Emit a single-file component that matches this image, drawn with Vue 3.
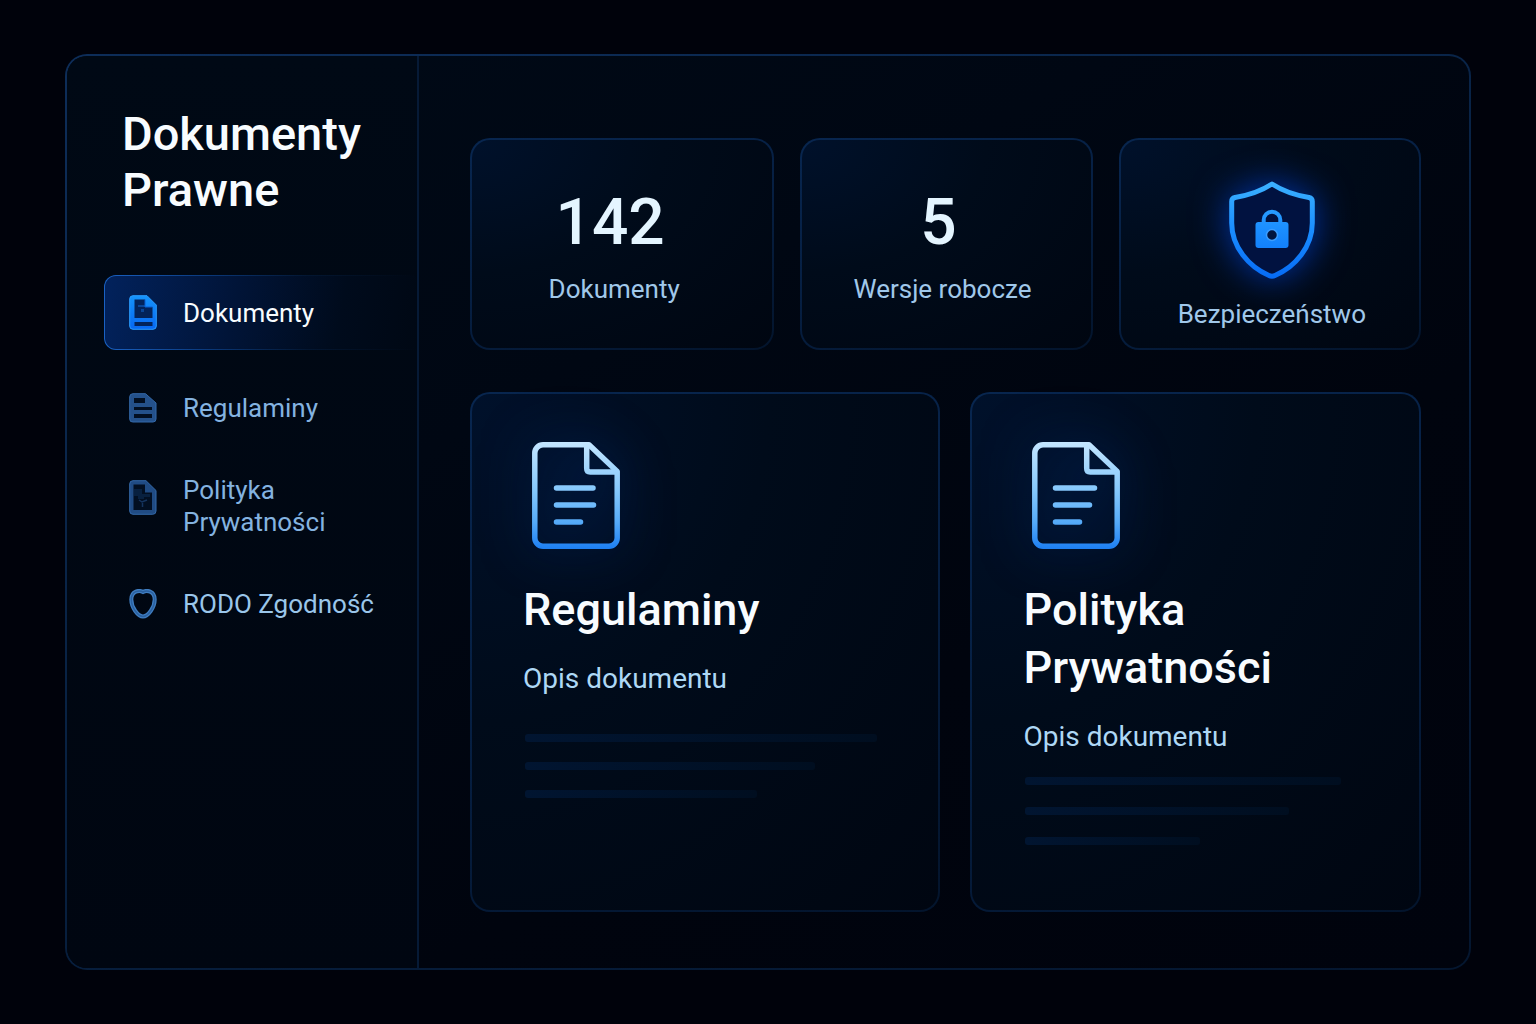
<script setup>
const navItems = [
  { label: 'Dokumenty', icon: 'document', active: true },
  { label: 'Regulaminy', icon: 'rules' },
  { label: 'Polityka Prywatności', icon: 'policy', tall: true },
  { label: 'RODO Zgodność', icon: 'heart', bright: true },
]

const docs = [
  {
    id: 'regulaminy',
    title: 'Regulaminy',
    description: 'Opis dokumentu',
    iconLines: ['M24.500 46H61', 'M24.500 63H61.500', 'M24.500 80H48.500'],
    lines: [97, 80, 64],
  },
  {
    id: 'polityka',
    title: 'Polityka Prywatności',
    description: 'Opis dokumentu',
    compact: true,
    iconLines: ['M23.500 46H62.500', 'M23.500 63H57.500', 'M23.500 80H47.500'],
    lines: [92, 77, 51],
  },
]
</script>

<template>
  <div class="page">
    <div class="panel">
      <aside class="sidebar">
        <h1 class="brand">Dokumenty Prawne</h1>
        <nav class="nav" aria-label="Menu">
          <a
            v-for="item in navItems"
            :key="item.label"
            href="#"
            class="nav-item"
            :class="{ active: item.active, tall: item.tall, bright: item.bright }"
          >
            <svg v-if="item.icon === 'document'" class="nav-icon" width="28" height="35" viewBox="0 0 28 35" aria-hidden="true">
              <defs>
                <linearGradient id="nav-doc" x1="0" y1="0" x2="0" y2="1">
                  <stop offset="0" stop-color="#1593fb" />
                  <stop offset="1" stop-color="#0768f2" />
                </linearGradient>
              </defs>
              <path d="M4 0.700H18L27.300 10V31a3.300 3.300 0 0 1-3.300 3.300H4A3.300 3.300 0 0 1 .7 31V4A3.300 3.300 0 0 1 4 .7z" fill="url(#nav-doc)" stroke="#2b9dff" stroke-width="1" />
              <path d="M5.500 4.500H16V12h7.500V23h-18z" fill="#03235a" />
              <path d="M5.500 27h18v4h-18z" fill="#03235a" />
              <path d="M9 10h7v2H9zM12 14h3v3h-3z" fill="#0a4596" />
              <path d="M16 4.500V12h7.500" fill="none" stroke="#0a5fd0" stroke-width="1" />
            </svg>
            <svg v-else-if="item.icon === 'rules'" class="nav-icon" width="28" height="30" viewBox="0 0 28 30" aria-hidden="true">
              <path d="M4 .7H16.500L27 10V26a3 3 0 0 1-3 3H4a3 3 0 0 1-3.300-3V4A3.300 3.300 0 0 1 4 .7z" fill="#24518b" stroke="#3368a8" />
              <path d="M5 5h11v5H5zM5 14h18v3H5zM5 21h18v4H5z" fill="#020f22" />
            </svg>
            <svg v-else-if="item.icon === 'policy'" class="nav-icon" width="28" height="35" viewBox="0 0 28 35" aria-hidden="true">
              <path d="M4 .7H17L27 10.500V31a3.300 3.300 0 0 1-3.300 3.300H4A3.300 3.300 0 0 1 .7 31V4A3.300 3.300 0 0 1 4 .7z" fill="#204b83" stroke="#3368a8" />
              <path d="M4.500 4.500h11.500v8h7V30H4.500z" fill="#020f22" />
              <path d="M5 9h8v5h8v3h-6v2H9v-3H5z" fill="#08203f" />
              <path d="M10 20l3 2 5-2M13.500 23v4" fill="none" stroke="#15345f" stroke-width="1.500" />
            </svg>
            <svg v-else class="nav-icon" width="28" height="30" viewBox="0 0 28 30" aria-hidden="true">
              <path d="M14 3C10.500 .8 2.300 1.800 2.300 10.500C2.300 18.500 9 27.500 14 27.500S25.700 18.500 25.700 10.500C25.700 1.800 17.500 .8 14 3z" fill="none" stroke="#3f7dc0" stroke-width="4" />
              <path d="M14 3C10.500 .8 2.300 1.800 2.300 10.500C2.300 18.500 9 27.500 14 27.500S25.700 18.500 25.700 10.500C25.700 1.800 17.500 .8 14 3z" fill="none" stroke="#2a609f" stroke-width="1.500" />
            </svg>
            <span class="nav-label">{{ item.label }}</span>
          </a>
        </nav>
      </aside>

      <main class="content">
        <section class="stats" aria-label="Statystyki">
          <div class="card stat first">
            <strong class="value">142</strong>
            <span class="label">Dokumenty</span>
          </div>
          <div class="card stat">
            <strong class="value">5</strong>
            <span class="label">Wersje robocze</span>
          </div>
          <div class="card stat security">
            <svg class="shield" width="86" height="98" viewBox="0 0 86 98" aria-hidden="true">
              <defs>
                <linearGradient id="shield-line" gradientUnits="userSpaceOnUse" x1="0" y1="0" x2="0" y2="98">
                  <stop offset="0" stop-color="#3cb2ff" />
                  <stop offset="0.500" stop-color="#1a8dff" />
                  <stop offset="1" stop-color="#066bf5" />
                </linearGradient>
              </defs>
              <path d="M43 3C33 9.500 18 14.500 6 16.500Q2.700 17.200 2.700 20.500V42C2.700 66 20 86 40 94.500Q43 96 46 94.500C66 86 83.300 66 83.300 42V20.500Q83.300 17.200 80 16.500C68 14.500 53 9.500 43 3z" fill="#011240" stroke="url(#shield-line)" stroke-width="5" stroke-linejoin="round" />
              <path d="M34.700 42V39a8.300 8.300 0 0 1 16.600 0V42" fill="none" stroke="url(#shield-line)" stroke-width="4" />
              <rect x="26.500" y="41" width="33" height="26" rx="3" fill="url(#shield-line)" />
              <circle cx="43" cy="54" r="5.500" fill="#01153f" stroke="#3b9dff" stroke-width="1.500" />
            </svg>
            <span class="label">Bezpieczeństwo</span>
          </div>
        </section>

        <section class="docs" aria-label="Dokumenty">
          <article v-for="doc in docs" :key="doc.id" class="card doc" :class="{ compact: doc.compact }">
            <svg class="doc-icon" width="88" height="107" viewBox="0 0 88 107" aria-hidden="true">
              <defs>
                <linearGradient :id="'line-' + doc.id" gradientUnits="userSpaceOnUse" x1="0" y1="0" x2="0" y2="107">
                  <stop offset="0" stop-color="#c4e6ff" />
                  <stop offset="0.450" stop-color="#85c8fc" />
                  <stop offset="0.750" stop-color="#55aaf8" />
                  <stop offset="1" stop-color="#1d7ff2" />
                </linearGradient>
              </defs>
              <g fill="none" :stroke="`url(#line-${doc.id})`" stroke-width="5.500" stroke-linejoin="round" stroke-linecap="round">
                <path d="M11 2.800H57L85.200 29.500V96a8.200 8.200 0 0 1-8.200 8.200H11A8.200 8.200 0 0 1 2.800 96V11A8.200 8.200 0 0 1 11 2.800z" />
                <path d="M54.700 3V26.500Q54.700 30 58.200 30H84" />
                <path v-for="line in doc.iconLines" :key="line" :d="line" />
              </g>
            </svg>
            <h2 class="doc-title">{{ doc.title }}</h2>
            <p class="doc-text">{{ doc.description }}</p>
            <div class="lines" aria-hidden="true">
              <span v-for="width in doc.lines" :key="width" class="line" :style="{ width: width + '%' }"></span>
            </div>
          </article>
        </section>
      </main>
    </div>
  </div>
</template>

<style>
body {
  margin: 0;
  background: #00020b;
}
</style>

<style scoped>
* {
  box-sizing: border-box;
}

.page {
  display: flex;
  min-height: 100vh;
  padding: 54px 65px;
  background: #00020b;
  font-family: Roboto, "Liberation Sans", sans-serif;
  color: #f8fcff;
}

.panel {
  display: flex;
  flex: 1;
  border: 2px solid transparent;
  border-radius: 22px;
  background:
    linear-gradient(150deg, #000a17 0%, #000713 35%, #00040e 65%, #00030d 100%) padding-box,
    linear-gradient(160deg, #0d2d59 0%, #082244 45%, #04162f 100%) border-box;
}

.sidebar {
  flex: 0 0 352px;
  padding: 50px 0 0 37px;
  border-right: 2px solid #061a36;
  background: linear-gradient(180deg, #000915, #000611);
  border-radius: 20px 0 0 20px;
}

.brand {
  width: min-content;
  margin: 0 0 57px 18px;
  font-size: 47px;
  font-weight: 500;
  line-height: 56px;
}

.nav {
  display: flex;
  flex-direction: column;
  gap: 10px;
}

.nav-item {
  display: flex;
  align-items: center;
  gap: 26px;
  padding: 19px 24px;
  border: 1px solid transparent;
  border-radius: 12px 0 0 12px;
  color: #84b3e0;
  font-size: 26px;
  line-height: 32px;
  text-decoration: none;
}

.nav-item.active {
  margin-bottom: 12px;
  background:
    linear-gradient(100deg, #02225c 0%, #011437 42%, #000b1c 75%, #000814 100%) padding-box,
    linear-gradient(90deg, #1a62c4 0%, #0b3c82 30%, #031631 65%, #000814 100%) border-box;
  color: #f8fcff;
}

.nav-item.bright {
  color: #9ac6ea;
}

.nav-item.tall {
  align-items: flex-start;
}

.nav-item.tall .nav-icon {
  margin-top: 6px;
}

.nav-icon {
  flex: none;
}

.content {
  display: flex;
  flex: 1;
  flex-direction: column;
  gap: 42px;
  min-width: 0;
  padding: 82px 48px 56px 51px;
}

.stats {
  display: grid;
  grid-template-columns: 304fr 292fr 302fr;
  gap: 26px;
}

.docs {
  display: grid;
  flex: 1;
  grid-template-columns: 471fr 451fr;
  gap: 30px;
}

.card {
  border: 2px solid transparent;
  border-radius: 20px;
  background:
    radial-gradient(ellipse at 0% 0%, #00112b 0%, #000b1a 45%, #000611 100%) padding-box,
    linear-gradient(160deg, #08264f 0%, #061f42 50%, #03142c 100%) border-box;
}

.stat {
  display: flex;
  flex-direction: column;
  align-items: center;
  gap: 8px;
  padding: 41px 24px 43px 16px;
}

.stat.first {
  padding-right: 32px;
}

.stat.security {
  gap: 19px;
  padding: 41px 16px 18px 20px;
}

.value {
  padding-right: 8px;
  color: #e4f5ff;
  font-size: 64px;
  font-weight: 500;
  line-height: 84px;
}

.label {
  color: #a0c8ea;
  font-size: 26px;
  line-height: 32px;
}

.shield {
  filter: drop-shadow(0 0 18px #0034ac);
}

.doc {
  padding: 48px 51px;
}

.doc-icon {
  display: block;
  margin: 0 0 32px 9px;
  filter: drop-shadow(0 0 24px #002a70);
}

.doc-title {
  margin: 0 0 22px;
  font-size: 45px;
  font-weight: 500;
  line-height: 58px;
}

.doc-text {
  margin: 0;
  color: #aed8f5;
  font-size: 28px;
  line-height: 36px;
}

.compact .doc-title {
  width: min-content;
}

.lines {
  display: flex;
  flex-direction: column;
  gap: 20px;
  margin: 37px 0 0 2px;
}

.compact .lines {
  gap: 22px;
  margin-top: 22px;
}

.line {
  height: 8px;
  border-radius: 3px;
  background: linear-gradient(90deg, #011531, #000e20);
}
</style>
